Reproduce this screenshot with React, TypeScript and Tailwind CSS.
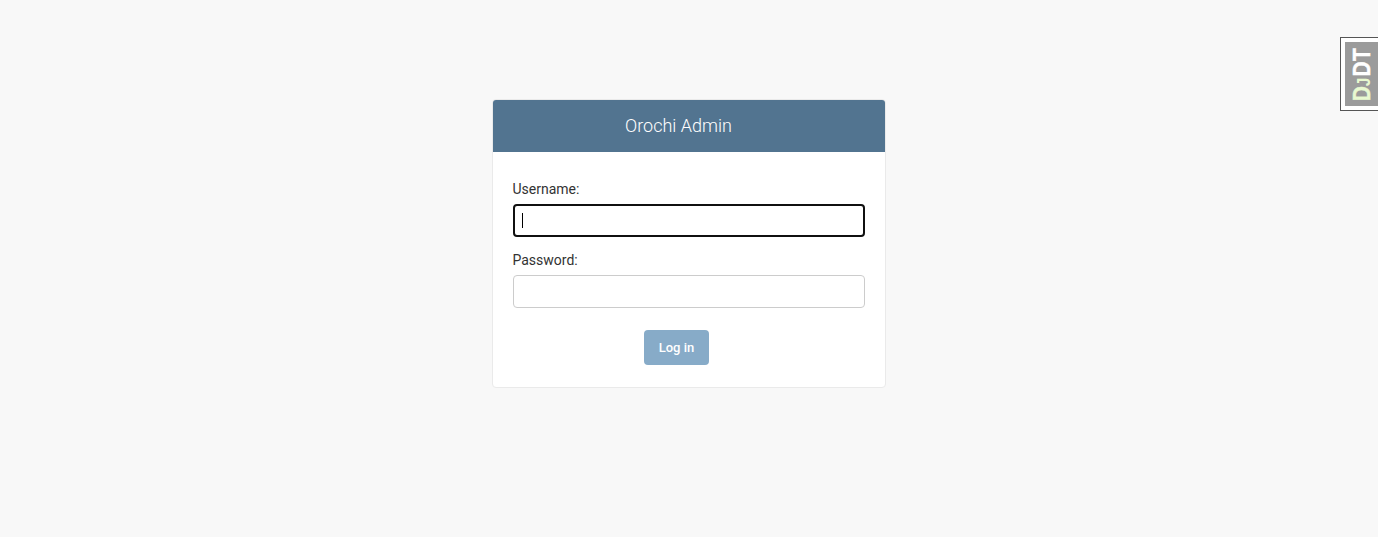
export default function App() {
  return (
    <div className="relative h-[537px] w-full overflow-hidden bg-[#f8f8f8] pl-[492px] pt-[99px] font-['Roboto',sans-serif] text-[#333]">
      <main className="h-[289px] w-[394px] overflow-hidden rounded border border-[#eaeaea] bg-white">
        <header className="flex h-[52px] items-center bg-[#527490] pl-[132px]">
          <h1 className="text-[18px] font-light leading-[20px] text-white">Orochi Admin</h1>
        </header>
        <form className="flex flex-col px-5 pt-[27px]">
          <label className="-ml-[0.5px] h-[25px] text-[14px] leading-[20px]">Username:</label>
          <div className="flex h-[33px] items-center rounded border-2 border-[#101010] pl-[7px]">
            <span className="h-[15px] w-px bg-black" />
          </div>
          <label className="-ml-[0.5px] mt-[13px] h-[25px] text-[14px] leading-[20px]">Password:</label>
          <input type="password" className="h-[33px] rounded border border-[#ccc]" />
          <button type="button" className="ml-[131px] mt-[22px] h-[35px] w-[65px] rounded bg-[#87abc8] text-[13px] font-medium text-white">
            Log in
          </button>
        </form>
      </main>
      <aside className="absolute right-0 top-[37px] flex h-[74px] w-[38px] border border-r-0 border-[#555] bg-white py-1 pl-1">
        <svg viewBox="0 0 33 64" className="h-[64px] w-[33px] bg-[#9b9b9b] font-['Liberation_Sans',sans-serif] font-bold">
          <g transform="translate(24.5 59.2) rotate(-90) scale(0.87 1)" fontSize="24" strokeWidth="0.5">
            <text x="0" y="0" fill="#e8f9d0" stroke="#e8f9d0">D</text>
            <text x="17.3" y="0" fill="#e8f9d0" fontSize="17.5">J</text>
            <text x="28.5" y="0" fill="#fff" stroke="#fff">D</text>
            <text x="46.2" y="0" fill="#fff" stroke="#fff">T</text>
          </g>
        </svg>
      </aside>
    </div>
  );
}
